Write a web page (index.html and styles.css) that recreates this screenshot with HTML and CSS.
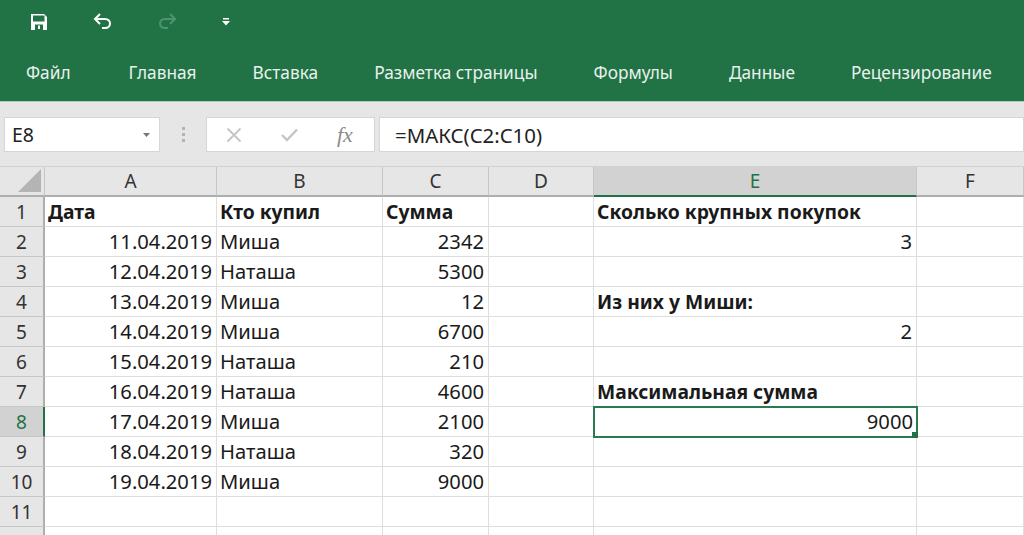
FILE: index.html
```html
<!DOCTYPE html>
<html lang="ru">
<head>
    <meta charset="UTF-8">
    <title>Книга1 - Excel</title>
    <link rel="stylesheet" href="styles.css">
</head>
<body>
    <header class="ribbon">
        <div class="quick-access">
            <svg class="qa-save" width="18" height="18" viewBox="0 0 18 18"><path fill="#fff" fill-rule="evenodd" d="M1 1h13l3 3v13H1zM3 2.500v6h11.500v-6zM5 11.500v5.500h8v-5.500zM8 12.500h2v3.500H8z"/></svg>
            <svg class="qa-undo" width="20" height="18" viewBox="0 0 20 18"><path fill="none" stroke="#fff" stroke-width="2" d="M2 6h10c3 0 5 2 5 4.500S15 15 12 15H9M7 1 2 6l5 5"/></svg>
            <svg class="qa-redo" width="20" height="18" viewBox="0 0 20 18"><path fill="none" stroke="#4f9470" stroke-width="2" d="M18 6H8c-3 0-5 2-5 4.500S5 15 8 15h3M13 1l5 5-5 5"/></svg>
            <svg class="qa-more" width="8" height="8" viewBox="0 0 8 8"><path fill="#fff" d="M1 0h6v1.500H1zM0 3h8L4 7.500z"/></svg>
        </div>
        <nav class="tabs">
            <span class="tab-file">Файл</span>
            <span>Главная</span>
            <span>Вставка</span>
            <span>Разметка страницы</span>
            <span>Формулы</span>
            <span>Данные</span>
            <span>Рецензирование</span>
        </nav>
    </header>

    <div class="formula-bar">
        <div class="box name-box">
            <span>E8</span>
            <svg width="7" height="4" viewBox="0 0 7 4"><path fill="#777" d="M0 0h7L3.500 4z"/></svg>
        </div>
        <div class="grip"><i></i><i></i><i></i></div>
        <div class="box fx-box">
            <svg width="16" height="16" viewBox="0 0 16 16"><path fill="none" stroke="#c4c4c4" stroke-width="1.800" d="M1.500 1.500l13 13M14.500 1.500l-13 13"/></svg>
            <svg width="17" height="14" viewBox="0 0 17 14"><path fill="none" stroke="#c4c4c4" stroke-width="2.400" d="M1 7l5 5L16 1.500"/></svg>
            <span class="fx">fx</span>
        </div>
        <div class="box formula">=МАКС(C2:C10)</div>
    </div>

    <table class="sheet">
        <colgroup>
            <col class="c-head"><col class="c-a"><col class="c-b"><col class="c-c"><col class="c-d"><col class="c-e"><col class="c-f">
        </colgroup>
        <thead>
            <tr>
                <th class="corner"><span class="corner-mark"></span></th>
                <th>A</th><th>B</th><th>C</th><th>D</th><th class="active-col">E</th><th>F</th>
            </tr>
        </thead>
        <tbody>
            <tr><th>1</th><td class="bold">Дата</td><td class="bold">Кто купил</td><td class="bold">Сумма</td><td></td><td class="bold">Сколько крупных покупок</td><td></td></tr>
            <tr><th>2</th><td class="num">11.04.2019</td><td>Миша</td><td class="num">2342</td><td></td><td class="num">3</td><td></td></tr>
            <tr><th>3</th><td class="num">12.04.2019</td><td>Наташа</td><td class="num">5300</td><td></td><td></td><td></td></tr>
            <tr><th>4</th><td class="num">13.04.2019</td><td>Миша</td><td class="num">12</td><td></td><td class="bold">Из них у Миши:</td><td></td></tr>
            <tr><th>5</th><td class="num">14.04.2019</td><td>Миша</td><td class="num">6700</td><td></td><td class="num">2</td><td></td></tr>
            <tr><th>6</th><td class="num">15.04.2019</td><td>Наташа</td><td class="num">210</td><td></td><td></td><td></td></tr>
            <tr><th>7</th><td class="num">16.04.2019</td><td>Наташа</td><td class="num">4600</td><td></td><td class="bold">Максимальная сумма</td><td></td></tr>
            <tr><th class="active-row">8</th><td class="num">17.04.2019</td><td>Миша</td><td class="num">2100</td><td></td><td class="num selected">9000<span class="handle"></span></td><td></td></tr>
            <tr><th>9</th><td class="num">18.04.2019</td><td>Наташа</td><td class="num">320</td><td></td><td></td><td></td></tr>
            <tr><th>10</th><td class="num">19.04.2019</td><td>Миша</td><td class="num">9000</td><td></td><td></td><td></td></tr>
            <tr><th>11</th><td></td><td></td><td></td><td></td><td></td><td></td></tr>
            <tr><th></th><td></td><td></td><td></td><td></td><td></td><td></td></tr>
        </tbody>
    </table>
</body>
</html>
```

FILE: styles.css
```css
* {
    margin: 0;
    padding: 0;
    box-sizing: border-box;
}

html, body {
    height: 100%;
    overflow: hidden;
}

body {
    background: #e6e6e6;
    font-family: "Noto Sans", "Open Sans", sans-serif;
    color: #222;
}

.ribbon {
    height: 102px;
    background: #217346;
    border-bottom: 1px solid #a9cdb9;
    color: #e8f1ec;
}

.quick-access {
    height: 44px;
    display: flex;
    align-items: center;
}

.qa-save { margin-left: 30px; }
.qa-undo { margin-left: 45px; }
.qa-redo { margin-left: 44px; }
.qa-more { margin-left: 45px; }

.tabs {
    display: flex;
    gap: 56px;
    padding: 18px 0 0 26px;
    font-size: 17.300px;
    line-height: 22px;
    white-space: nowrap;
}

.tab-file {
    margin-right: 2px;
}

.formula-bar {
    height: 65px;
    padding-top: 15px;
    display: flex;
    align-items: flex-start;
    border-bottom: 1px solid #d0d0d0;
}

.box {
    height: 35px;
    background: #fff;
    border: 1px solid #d6d6d6;
    display: flex;
    align-items: center;
}

.name-box {
    width: 156px;
    margin-left: 4px;
    padding: 0 9px 0 7px;
    justify-content: space-between;
    font-size: 19.500px;
}

.grip {
    width: 46px;
    height: 35px;
    display: flex;
    flex-direction: column;
    align-items: center;
    justify-content: center;
    gap: 3px;
}

.grip i {
    width: 3px;
    height: 3px;
    background: #b4b4b4;
}

.fx-box {
    width: 169px;
    padding-left: 19px;
    gap: 39px;
}

.fx {
    font-family: "Liberation Serif", serif;
    font-style: italic;
    font-size: 22px;
    color: #8c8c8c;
}

.formula {
    flex: 1;
    margin-left: 4px;
    padding-left: 15px;
    font-size: 20.400px;
}

.sheet {
    width: 1024px;
    table-layout: fixed;
    border-collapse: separate;
    border-spacing: 0;
    background: #fff;
    font-size: 20.200px;
}

.c-head { width: 45px; }
.c-a { width: 172px; }
.c-b { width: 166px; }
.c-c { width: 106px; }
.c-d { width: 105px; }
.c-e { width: 323px; }
.c-f { width: 107px; }

.sheet thead th {
    height: 30px;
    background: #e6e6e6;
    border-right: 1px solid #c6c6c6;
    border-bottom: 2px solid #aeaeae;
    font-weight: normal;
    font-size: 19px;
    color: #333;
}

.sheet tbody th {
    height: 30px;
    background: #e6e6e6;
    border-right: 2px solid #aeaeae;
    border-bottom: 1px solid #c6c6c6;
    font-weight: normal;
    font-size: 19px;
    line-height: 24px;
    color: #333;
}

.sheet td {
    height: 30px;
    padding: 0 4px 2px 3px;
    border-right: 1px solid #dedede;
    border-bottom: 1px solid #dedede;
    line-height: 24px;
    color: #1a1a1a;
    white-space: nowrap;
    overflow: visible;
}

.sheet td.bold {
    padding-bottom: 0;
    font-weight: bold;
    font-size: 19.300px;
}

.sheet td.num { text-align: right; }

.sheet thead th.corner {
    position: relative;
}

.corner-mark {
    position: absolute;
    right: 3px;
    bottom: 3px;
    width: 0;
    height: 0;
    border-left: 23px solid transparent;
    border-bottom: 23px solid #b4b4b4;
}

.sheet thead th.active-col {
    background: #d2d2d2;
    border-bottom-color: #217346;
    color: #217346;
}

.sheet tbody th.active-row {
    background: #d2d2d2;
    border-right-color: #217346;
    color: #217346;
}

.sheet td.selected {
    position: relative;
    padding-right: 3px;
    outline: 2px solid #2a7a4f;
    outline-offset: -1px;
}

.handle {
    position: absolute;
    right: -2px;
    bottom: -2px;
    width: 6px;
    height: 6px;
    background: #217346;
}
```
